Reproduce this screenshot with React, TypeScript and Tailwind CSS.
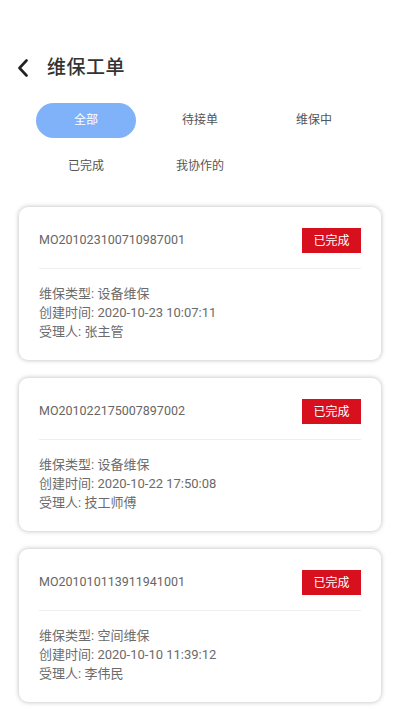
import React from "react";

const orders = [
  { no: "MO201023100710987001", type: "设备维保", time: "2020-10-23 10:07:11", person: "张主管" },
  { no: "MO201022175007897002", type: "设备维保", time: "2020-10-22 17:50:08", person: "技工师傅" },
  { no: "MO201010113911941001", type: "空间维保", time: "2020-10-10 11:39:12", person: "李伟民" },
];

const tabs = ["全部", "待接单", "维保中", "已完成", "我协作的"];

export default function App() {
  return (
    <div
      className="w-[400px] h-[710px] bg-white overflow-hidden"
      style={{ fontFamily: '"Roboto", "Noto Sans CJK SC", sans-serif' }}
    >
      <div className="flex items-center h-[36px] mt-[50px] pl-[17px]">
        <svg width="12" height="18" viewBox="0 0 12 18" className="mr-[18px]">
          <path d="M9.5 1.5 L2.5 9 L9.5 16.5" fill="none" stroke="#222" strokeWidth="2.6" strokeLinecap="round" strokeLinejoin="round" />
        </svg>
        <span className="text-[19px] font-medium text-[#333] tracking-[0.5px]">维保工单</span>
      </div>

      <div className="grid grid-cols-3 mx-[29px] mt-[11px]">
        {tabs.map((t, i) => (
          <div key={t} className="flex items-center justify-center h-[46px]">
            {i === 0 ? (
              <div className="w-[100px] h-[35px] rounded-full bg-[#7fb2f8] flex items-center justify-center text-white text-[12px]">
                {t}
              </div>
            ) : (
              <span className="text-[12px] text-[#555]">{t}</span>
            )}
          </div>
        ))}
      </div>

      <div className="flex flex-col gap-[18px] mx-[19px] mt-[18px]">
        {orders.map((o) => (
          <div
            key={o.no}
            className="h-[153px] rounded-[9px] bg-white shadow-[0_0_5px_rgba(0,0,0,0.28)] px-[20px] pt-[21px]"
          >
            <div className="flex items-center justify-between">
              <span className="text-[12.5px] text-[#666]">{o.no}</span>
              <div className="w-[59px] h-[25px] bg-[#d80f1c] text-white text-[12px] flex items-center justify-center">
                已完成
              </div>
            </div>
            <div className="h-px bg-[#efefef] mt-[15px]" />
            <div className="mt-[15px] text-[13px] leading-[19px] text-[#6b6b6b]">
              <div>维保类型: {o.type}</div>
              <div>创建时间: {o.time}</div>
              <div>受理人: {o.person}</div>
            </div>
          </div>
        ))}
      </div>
    </div>
  );
}
